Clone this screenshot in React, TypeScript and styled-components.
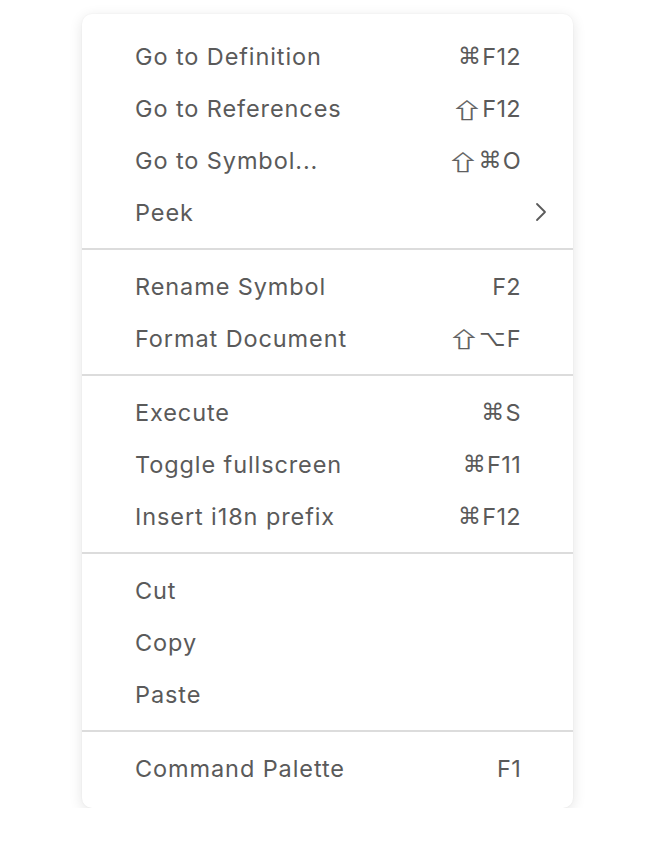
import React from "react";
import styled, { createGlobalStyle, css } from "styled-components";

const Global = createGlobalStyle`
  html, body { margin: 0; padding: 0; background: #ffffff; }
  body { font-family: Inter, "Noto Sans", "DejaVu Sans", sans-serif; }
`;

const Page = styled.div`
  padding: 14px 0 0 82px;
`;

const Menu = styled.div`
  width: 491px;
  box-sizing: border-box;
  background: #ffffff;
  border-radius: 10px;
  box-shadow: 0 3px 14px rgba(0, 0, 0, 0.11), 0 0 2px rgba(0, 0, 0, 0.05);
  padding: 16px 0 14px;
  display: flex;
  flex-direction: column;
`;

const Row = styled.div`
  height: 52px;
  display: flex;
  align-items: center;
  justify-content: space-between;
  padding: 0 52px 0 53px;
  color: #5a5a5a;
  font-size: 23.5px;
  letter-spacing: 0.9px;
`;

const Label = styled.span``;

const Shortcut = styled.span`
  display: inline-flex;
  align-items: center;
  letter-spacing: 0.3px;
`;

const Sym = styled.span<{ $shift?: boolean }>`
  display: inline-block;
  font-family: "DejaVu Sans", sans-serif;
  font-size: 23px;
  margin-right: 1px;
  ${(p) =>
    p.$shift &&
    css`
      font-family: "Noto Sans CJK JP", "DejaVu Sans", sans-serif;
      font-size: 22px;
      transform: scale(1.45, 0.95);
      -webkit-text-stroke: 0.35px currentColor;
      margin: 0 4px 0 3px;
    `}
`;

const Chevron = styled.svg`
  margin-right: -26px;
  width: 12px;
  height: 20px;
`;

const Separator = styled.div`
  height: 2px;
  background: #dcdcdc;
  margin: 10px 0;
`;

type Item = { label: string; keys?: string; sub?: boolean };

const groups: Item[][] = [
  [
    { label: "Go to Definition", keys: "⌘F12" },
    { label: "Go to References", keys: "⇧F12" },
    { label: "Go to Symbol...", keys: "⇧⌘O" },
    { label: "Peek", sub: true },
  ],
  [
    { label: "Rename Symbol", keys: "F2" },
    { label: "Format Document", keys: "⇧⌥F" },
  ],
  [
    { label: "Execute", keys: "⌘S" },
    { label: "Toggle fullscreen", keys: "⌘F11" },
    { label: "Insert i18n prefix", keys: "⌘F12" },
  ],
  [{ label: "Cut" }, { label: "Copy" }, { label: "Paste" }],
  [{ label: "Command Palette", keys: "F1" }],
];

const renderKeys = (k: string) =>
  Array.from(k).map((ch, i) =>
    "⌘⇧⌥".includes(ch) ? (
      <Sym key={i} $shift={ch === "⇧"}>
        {ch}
      </Sym>
    ) : (
      <span key={i}>{ch}</span>
    )
  );

export default function App() {
  return (
    <>
      <Global />
      <Page>
        <Menu>
          {groups.map((g, gi) => (
            <React.Fragment key={gi}>
              {gi > 0 && <Separator />}
              {g.map((it) => (
                <Row key={it.label}>
                  <Label>{it.label}</Label>
                  {it.keys && <Shortcut>{renderKeys(it.keys)}</Shortcut>}
                  {it.sub && (
                    <Chevron viewBox="0 0 12 20">
                      <path
                        d="M2 2 L10 10 L2 18"
                        fill="none"
                        stroke="#5a5a5a"
                        strokeWidth="1.8"
                        strokeLinecap="round"
                        strokeLinejoin="round"
                      />
                    </Chevron>
                  )}
                </Row>
              ))}
            </React.Fragment>
          ))}
        </Menu>
      </Page>
    </>
  );
}
